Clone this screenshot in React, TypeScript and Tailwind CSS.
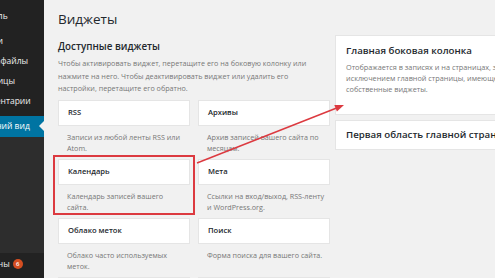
import React from "react";

const menuItems = [
    { label: "Консоль", sepAfter: true },
    { label: "Записи" },
    { label: "Медиафайлы" },
    { label: "Страницы" },
    { label: "Комментарии", sepAfter: true },
];

const widgets = [
    { title: "RSS", lines: ["Записи из любой ленты RSS или", "Atom."] },
    { title: "Архивы", lines: ["Архив записей вашего сайта по", "месяцам."] },
    { title: "Календарь", lines: ["Календарь записей вашего", "сайта."], marked: true },
    { title: "Мета", lines: ["Ссылки на вход/выход, RSS-ленту", "и WordPress.org."] },
    { title: "Облако меток", lines: ["Облако часто используемых", "меток."] },
    { title: "Поиск", lines: ["Форма поиска для вашего сайта."] },
    { title: "Произвольное меню", lines: ["Добавьте на боковую колонку", "произвольное меню."] },
    { title: "Рубрики", lines: ["Список или выпадающее меню", "рубрик."] },
];

function Sidebar() {
    return (
        <aside className="w-[44px] shrink-0 h-full bg-[#222] overflow-hidden flex flex-col text-[8.5px] text-[#eee] relative">
            <div className="h-[6px]" />
            {menuItems.map(({ label, sepAfter }) => (
                <div key={label}>
                    <div className="h-[20px] flex items-center ml-[-27px] whitespace-nowrap">{label}</div>
                    {sepAfter && <div className="h-[5px]" />}
                </div>
            ))}
            {/* -----ACTIVE ITEM----- */}
            <div className="h-[21px] flex items-center bg-[#0074a2] text-white relative">
                <span className="ml-[-27px] whitespace-nowrap">Внешний вид</span>
                <span className="absolute right-0 top-[5px] border-y-[5px] border-y-transparent border-r-[5px] border-r-[#f1f1f1]" />
            </div>
            <div className="h-[116px] bg-[#2d2d2d]" />
            <div className="h-[22px] flex items-center ml-[-27px] whitespace-nowrap">
                <span>Плагины</span>
                <span className="ml-[3px] w-[10px] h-[10px] rounded-full bg-[#d54e21] text-white text-[6px] font-semibold flex items-center justify-center">6</span>
            </div>
        </aside>
    );
}

function Widget({ title, lines, marked }: { title: string; lines: string[]; marked?: boolean }) {
    return (
        <div className="relative">
            <div className="h-[26px] bg-white border border-[#e5e5e5] flex items-center pl-[9px] text-[7.6px] font-semibold text-[#23282d] whitespace-nowrap overflow-hidden">
                {title}
            </div>
            <div className="h-[27px] pt-[6px] pl-[9px] text-[7.2px] leading-[10.5px] text-[#777]">
                {lines.map((line) => (
                    <div key={line} className="whitespace-nowrap">
                        {line}
                    </div>
                ))}
            </div>
            {marked && <div className="absolute -left-[5px] -top-[4px] -right-[5px] -bottom-[3px] border-2 border-[#dc3a40]" />}
        </div>
    );
}

export default function App() {
    return (
        <div className="w-[495px] h-[278px] overflow-hidden flex relative font-['Open_Sans',sans-serif]">
            <Sidebar />
            <main className="flex-1 h-full bg-[#f1f1f1] pl-[14px] overflow-hidden">
                <h1 className="pt-[9px] text-[13.5px] leading-[20px] text-[#23282d]">Виджеты</h1>
                <div className="flex">
                    {/* -----AVAILABLE WIDGETS----- */}
                    <section className="w-[272px] shrink-0">
                        <h2 className="mt-[11px] text-[9.8px] leading-[14px] font-semibold text-[#23282d]">Доступные виджеты</h2>
                        <div className="mt-[3px] text-[7.2px] leading-[12.5px] text-[#777] whitespace-nowrap">
                            <div>Чтобы активировать виджет, перетащите его на боковую колонку или</div>
                            <div>нажмите на него. Чтобы деактивировать виджет или удалить его</div>
                            <div>настройки, перетащите его обратно.</div>
                        </div>
                        <div className="mt-[5.5px] grid grid-cols-2 gap-x-[8px] gap-y-[6px]">
                            {widgets.map((w) => (
                                <Widget key={w.title} {...w} />
                            ))}
                        </div>
                    </section>
                    {/* -----SIDEBARS----- */}
                    <section className="ml-[5px] mt-[6px] w-[200px] shrink-0 flex flex-col gap-[5px]">
                        <div className="bg-white border border-[#e5e5e5] pl-[10px] pt-[8px] pb-[19px]">
                            <h3 className="text-[9.7px] leading-[14px] font-semibold text-[#23282d] whitespace-nowrap">Главная боковая колонка</h3>
                            <div className="mt-[4px] text-[7.3px] leading-[11px] text-[#777] whitespace-nowrap">
                                <div>Отображается в записях и на страницах, за</div>
                                <div>исключением главной страницы, имеющей</div>
                                <div>собственные виджеты.</div>
                            </div>
                        </div>
                        <div className="bg-white border border-[#e5e5e5] pl-[10px] py-[7px]">
                            <h3 className="text-[9.7px] leading-[14px] font-semibold text-[#23282d] whitespace-nowrap">Первая область главной страницы</h3>
                        </div>
                    </section>
                </div>
            </main>
            {/* -----ANNOTATION ARROW----- */}
            <svg className="absolute inset-0 pointer-events-none" width="495" height="278" viewBox="0 0 495 278">
                <line x1="197" y1="163" x2="336" y2="108.3" stroke="#dc3a40" strokeWidth="1.5" />
                <polygon points="344,105 336.9,111.6 334.3,105.1" fill="#dc3a40" />
            </svg>
        </div>
    );
}
